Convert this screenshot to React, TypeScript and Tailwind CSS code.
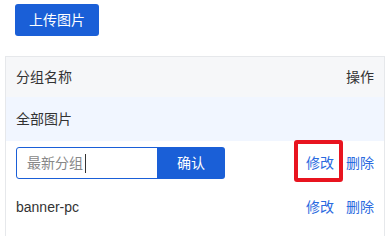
import { useState } from 'react';

const groups = ['banner-pc'];

export default function App() {
  const [name, setName] = useState('');

  return (
    <div
      className="w-[390px] h-[236px] overflow-hidden bg-white text-[14px] text-[#333]"
      style={{ fontFamily: '"Liberation Sans", "Noto Sans CJK SC", sans-serif' }}
    >
      <div className="pl-[15px] pt-[4px]">
        <button className="w-[84px] h-[32px] rounded-[3px] bg-[#1a5fd7] text-white text-[14px]">
          上传图片
        </button>
      </div>

      <div className="mt-[20px] ml-[5px] w-[380px] border-t border-l border-r border-[#e6e8eb]">
        {/* header */}
        <div className="flex items-center justify-between h-[40px] px-[10px] bg-[#f6f7f9]">
          <span>分组名称</span>
          <span>操作</span>
        </div>

        {/* all images */}
        <div className="flex items-center h-[44px] px-[10px] bg-[#f1f6ff]">
          <span>全部图片</span>
        </div>

        {/* new group */}
        <div className="relative flex items-center justify-between h-[44px] pl-[10px] pr-[10px]">
          <div className="relative flex">
            <input
              value={name}
              onChange={(e) => setName(e.target.value)}
              placeholder="最新分组"
              className="w-[142px] h-[32px] px-[10px] border border-[#1a5fd7] rounded-l-[3px] outline-none text-[14px] placeholder:text-[#888]"
            />
            {!name && <span className="absolute left-[69px] top-[7px] w-px h-[19px] bg-[#333]" />}
            <button className="w-[68px] h-[32px] -ml-px rounded-r-[3px] bg-[#1a5fd7] text-white text-[14px]">
              确认
            </button>
          </div>
          <div className="flex gap-[12px] text-[#2a6ae0]">
            <span>修改</span>
            <span>删除</span>
          </div>
          <div className="absolute left-[288px] top-[-1px] w-[49px] h-[42px] border-[4px] border-[#e8141f] rounded-[3px]" />
        </div>

        {groups.map((g) => (
          <div key={g} className="flex items-center justify-between h-[44px] px-[10px]">
            <span>{g}</span>
            <div className="flex gap-[12px] text-[#2a6ae0]">
              <span>修改</span>
              <span>删除</span>
            </div>
          </div>
        ))}
        <div className="h-[20px]" />
      </div>
    </div>
  );
}
